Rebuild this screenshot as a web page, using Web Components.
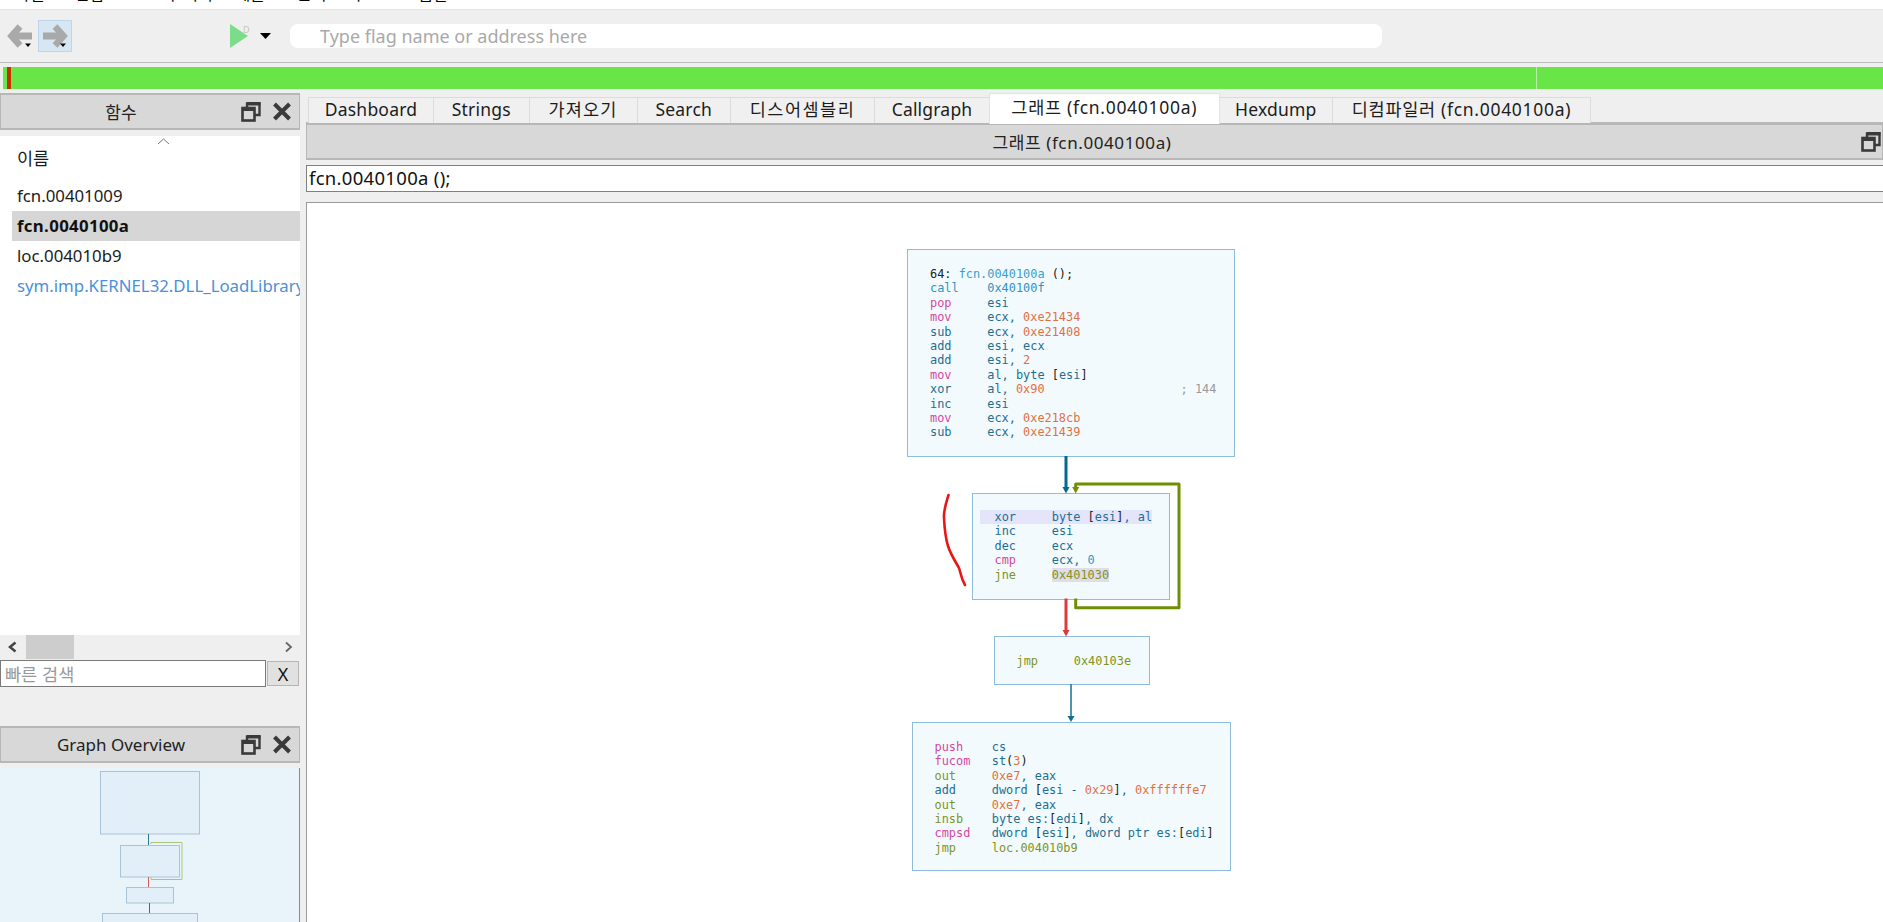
<!DOCTYPE html>
<html lang="ko"><head><meta charset="utf-8"><title>Cutter</title>
<style>
html,body{margin:0;padding:0;height:100%;overflow:hidden;background:#efefef;font-family:"Noto Sans","Noto Sans CJK KR",sans-serif;color:#111}
asm-line i{font-style:normal}
.k{color:#1d6f8f}.p{color:#d5479f}.c{color:#3193bd}.g{color:#7f9420}.o{color:#e2703f}.n{color:#2a9cc4}.b{color:#222}.m{color:#9a9a9a}.f{color:#3aa0c8}
</style></head><body>
<script>
function def(name, html, setup){
  customElements.define(name, class extends HTMLElement{
    constructor(){super();this.attachShadow({mode:'open'}).innerHTML=html;}
    connectedCallback(){ if(setup) setup(this); }
  });
}
const FLOAT=`<svg width="20" height="21" viewBox="0 0 20 21"><path d="M6 6V2.5H18.5V14H14" fill="none" stroke="#3a3a3a" stroke-width="2.4"/><rect x="6" y="1" width="13.5" height="3.5" fill="#3a3a3a"/><rect x="1.5" y="7" width="12" height="12.5" fill="none" stroke="#3a3a3a" stroke-width="2.6"/><rect x="1" y="6.5" width="13" height="3.5" fill="#3a3a3a"/></svg>`;
const CLOSE=`<svg width="20" height="19" viewBox="0 0 20 19"><path d="M2.5 2L17.5 17M17.5 2L2.5 17" stroke="#3a3a3a" stroke-width="4" fill="none"/></svg>`;

def('menu-strip',`<style>:host{display:block;height:9px;background:#fff;border-bottom:1px solid #e4e4e4;overflow:hidden;font-size:16px;line-height:20px;color:#000}
div{display:flex;margin-top:-16px;height:20px;white-space:nowrap}</style>
<div><span style="margin-left:15px">파일</span><span style="margin-left:30px">편집</span><span style="margin-left:42px">보기</span><span style="margin-left:8px">디버그</span><span style="margin-left:8px">에뮬</span><span style="margin-left:32px">분석</span><span style="margin-left:10px">도구</span><span style="margin-left:38px">도움말</span></div>`);

def('tool-bar',`<style>:host{display:flex;align-items:center;height:52px;background:#efefef;border-bottom:1px solid #bcbcbc;box-sizing:content-box}
.back{width:35px;height:32px;margin-left:3px;display:block}
.fwd{width:32px;height:30px;background:#d7e6f3;border:1px solid #bfd5e9;display:block}
.play{width:46px;height:24px;margin-left:153px;display:block}
input{margin-left:19px;width:1092px;height:24px;box-sizing:border-box;border:0;border-radius:8px;background:#fff;padding:0 0 0 30px;font:18px "Noto Sans","Noto Sans CJK KR",sans-serif;outline:0}
input::placeholder{color:#a9a9a9;opacity:1}</style>
<svg class="back" viewBox="0 0 35 32"><path d="M10 16H29" stroke="#a9a9a9" stroke-width="7"/><path d="M17 6.500L8.500 16L17 25.500" stroke="#a9a9a9" stroke-width="6.500" fill="none"/><path d="M22 23.500h6l-3 3.500z" fill="#000"/></svg>
<svg class="fwd" viewBox="0 0 32 30"><path d="M4 15H23" stroke="#a9a9a9" stroke-width="7"/><path d="M16 5.500L24.500 15L16 24.500" stroke="#a9a9a9" stroke-width="6.500" fill="none"/><path d="M21 22.500h6l-3 3.500z" fill="#000"/></svg>
<svg class="play" viewBox="0 0 46 24"><path d="M5 0L23 12L5 24z" fill="#7bdc8a"/><text x="18" y="9" font-size="9" fill="#c4c4c4" font-family="Noto Sans">D</text><path d="M35 9h11l-5.500 6z" fill="#000"/></svg>
<input placeholder="Type flag name or address here">`);

def('seek-bar',`<style>:host{display:block;height:22px;margin:4px 0 4px 3px;background:linear-gradient(90deg,#69e548 4px,#c93000 4px,#c93000 7.500px,#69e548 7.500px,#69e548 1532.500px,#b8eea8 1532.500px,#b8eea8 1533.500px,#69e548 1533.500px)}</style>`);

def('dock-title',`<style>:host{display:flex;align-items:center;box-sizing:border-box;height:37px;background:#d8d8d8;border:solid #b7b7b7;border-width:2.500px 1px 2.500px 1px;font-size:17px;color:#222;white-space:nowrap}
.t{flex:1;text-align:center;padding-right:var(--pad,0px)}.ic{display:flex;align-items:center;gap:var(--igap,11px);padding-right:var(--iright,7px)}svg{display:block}</style>
<div class="t"><slot></slot></div><div class="ic" id="ic"></div>`,el=>{
  const ic=el.shadowRoot.getElementById('ic');
  ic.innerHTML=FLOAT+(el.hasAttribute('noclose')?'':CLOSE);
});

def('func-list',`<style>:host{display:block;height:500px;background:#fff;overflow:hidden;position:relative;font-size:16.800px;white-space:nowrap;color:#1b1b1b}
.caret{position:absolute;left:157px;top:2px}
.h{height:45px;box-sizing:border-box;padding:10px 0 0 17px;line-height:24px;font-size:17.500px}
</style><svg class="caret" width="13" height="7" viewBox="0 0 13 7"><path d="M1 6L6.500 1L12 6" fill="none" stroke="#777"/></svg>
<div class="h">이름</div><slot></slot>`);
def('func-row',`<style>:host{display:block;height:30px;line-height:30px;margin-left:12px;padding-left:5px;overflow:hidden}
:host([sel]){background:#d6d6d6;font-weight:700;letter-spacing:.35px;color:#111}:host([imp]){color:#4a90d9}</style><slot></slot>`);

def('h-scroll',`<style>:host{display:flex;align-items:center;height:24px;width:300px;position:relative}
.t{position:absolute;left:26px;top:0;width:48px;height:24px;background:#cdcdcd}svg{position:absolute;top:6px}</style>
<svg style="left:7px" width="11" height="12" viewBox="0 0 11 12"><path d="M8.500 1.500L3 6L8.500 10.500" fill="none" stroke="#444" stroke-width="2.500"/></svg><div class="t"></div>
<svg style="left:283px" width="11" height="12" viewBox="0 0 11 12"><path d="M3 1.500L8 6L3 10.500" fill="none" stroke="#666" stroke-width="1.800"/></svg>`);

def('quick-search',`<style>:host{display:flex;height:27px;margin-top:1px;width:299px}
input{width:266px;box-sizing:border-box;height:27px;border:1px solid #7a7a7a;background:#fff;padding:0 0 0 4px;font:17.500px "Noto Sans CJK KR","Noto Sans",sans-serif;outline:0}
input::placeholder{color:#999;opacity:1}
button{width:32px;height:25px;margin:1px 0 0 1px;border:1px solid #b5b5b5;background:#e1e1e1;font:18px "Noto Sans",sans-serif;color:#111;padding:0 0 2px}</style>
<input placeholder="빠른 검색"><button>X</button>`);

def('graph-overview',`<style>:host{display:block;height:154px;width:299px;margin-top:5px;background:#e8f4fa;border-right:1px solid #8a8a8a;overflow:hidden}svg{display:block}</style>
<svg width="299" height="154" viewBox="0 768 299 154">
<g fill="#e2eff9" stroke="#a9c2d4" stroke-width="1">
<rect x="100.500" y="771.500" width="99" height="62.500"/>
<rect x="120.500" y="845.500" width="59" height="31.500"/>
<rect x="126.500" y="887.500" width="47" height="15.500"/>
<rect x="102.500" y="913.500" width="95" height="49"/></g>
<path d="M148.500 834V845" stroke="#2b7596"/><path d="M151 844V842.500H182V879.500H151V877" fill="none" stroke="#a8c77a"/>
<path d="M148.500 877V887" stroke="#cf5d5d"/><path d="M149.500 903V913" stroke="#2b7596"/>
</svg>`);

def('left-dock',`<style>:host{display:flex;flex-direction:column;width:300px;flex:none}
.gap{height:6px}.gap2{height:40px}</style><slot name="top"></slot><div class="gap"></div><slot name="list"></slot><slot name="scroll"></slot><slot name="search"></slot><div class="gap2"></div><slot name="ov"></slot><slot name="ovp"></slot>`);

def('tab-bar',`<style>:host{display:flex;align-items:flex-end;height:30px;box-sizing:border-box;padding-left:3px;border-bottom:1.500px solid #b9b9b9;font-size:17.500px;letter-spacing:.2px;color:#1c1c1c;white-space:nowrap}</style><slot></slot>`);
def('tab-item',`<style>:host{display:block;box-sizing:border-box;height:26px;line-height:22px;text-align:center;background:#f0f0f0;border:1px solid #dcdcdc;border-bottom:0;margin-left:-1px;margin-bottom:-1px}
:host([active]){height:31px;line-height:26px;background:#fff;border-color:#e2e2e2;margin-bottom:-2px;position:relative;z-index:1}</style><slot></slot>`);

def('func-sig',`<style>:host{display:block;height:27px;box-sizing:border-box;margin-top:5px;border:solid #808080;border-width:1px 0 1px 1px;background:#fff;font-size:18.500px;letter-spacing:.3px;line-height:24px;padding-left:2px;color:#111;white-space:nowrap}</style><slot></slot>`);

def('graph-canvas',`<style>:host{display:block;position:relative;box-sizing:border-box;height:720px;margin-top:10px;background:#fff;border:solid #999;border-width:1.500px 0 0 1.500px;overflow:hidden}
svg{position:absolute;left:0;top:0}</style>
<slot></slot>
<svg width="1577" height="720" viewBox="307 203 1577 720">
<path d="M1066 456V488" stroke="#006b8c" stroke-width="3" fill="none"/><path d="M1062.500 487h7l-3.500 6.500z" fill="#006b8c"/>
<path d="M1075.700 598.500V607.700H1179V484H1075.700V488" stroke="#6e8f00" stroke-width="3" fill="none" stroke-linejoin="round"/><path d="M1072.200 487h7l-3.500 6.500z" fill="#6e8f00"/>
<path d="M1066 598.500V631" stroke="#dc3a3a" stroke-width="3" fill="none"/><path d="M1062.500 630h7l-3.500 6.500z" fill="#dc3a3a"/>
<path d="M1071 684V717" stroke="#156f90" stroke-width="1.500" fill="none"/><path d="M1067.500 716h7l-3.500 6z" fill="#156f90"/>
<path d="M948.500 495C946 503 943.500 510 944 518C944.500 528 945.500 538 948 546C950.500 554 955 561 958.500 567C961 572 960 576 965 585" stroke="#e81616" stroke-width="2.600" fill="none" stroke-linecap="round"/>
</svg>`);
def('graph-node',`<style>:host{display:block;position:absolute;box-sizing:border-box;background:#f3fafe;border:1.500px solid #8fbcdb;padding:var(--pt) 0 0 var(--pl);font:11.900px/14.400px "DejaVu Sans Mono",monospace;color:#1d6f8f}</style><slot></slot>`);
def('asm-line',`<style>:host{display:block;height:14.400px;white-space:pre}:host([hl]){width:fit-content;background:#e4e4fb;margin-left:-15px;padding-left:15px}</style><slot></slot>`);
def('right-dock',`<style>:host{display:flex;flex-direction:column;flex:1;min-width:0}</style><slot></slot>`);
def('dock-area',`<style>:host{display:flex;gap:6px;height:829px}</style><slot></slot>`);
def('app-shell',`<style>:host{display:block;height:922px;overflow:hidden}</style><slot></slot>`);
</script>
<app-shell>
<menu-strip></menu-strip>
<tool-bar></tool-bar>
<seek-bar></seek-bar>
<dock-area>
 <left-dock>
  <dock-title slot="top">함수</dock-title>
  <func-list slot="list">
   <func-row>fcn.00401009</func-row>
   <func-row sel>fcn.0040100a</func-row>
   <func-row>loc.004010b9</func-row>
   <func-row imp>sym.imp.KERNEL32.DLL_LoadLibraryA</func-row>
  </func-list>
  <h-scroll slot="scroll"></h-scroll>
  <quick-search slot="search"></quick-search>
  <dock-title slot="ov">Graph Overview</dock-title>
  <graph-overview slot="ovp"></graph-overview>
 </left-dock>
 <right-dock>
  <tab-bar>
   <tab-item style="width:126px">Dashboard</tab-item>
   <tab-item style="width:96.500px">Strings</tab-item>
   <tab-item style="width:109px;letter-spacing:1.200px">가져오기</tab-item>
   <tab-item style="width:94.500px">Search</tab-item>
   <tab-item style="width:145px;letter-spacing:1.500px">디스어셈블리</tab-item>
   <tab-item style="width:116px">Callgraph</tab-item>
   <tab-item active style="width:230.500px;letter-spacing:.7px">그래프 (fcn.0040100a)</tab-item>
   <tab-item style="width:114.500px">Hexdump</tab-item>
   <tab-item style="width:259px;letter-spacing:.7px">디컴파일러 (fcn.0040100a)</tab-item>
  </tab-bar>
  <dock-title noclose style="--pad:4px;--iright:1px;letter-spacing:.6px">그래프 (fcn.0040100a)</dock-title>
  <func-sig>fcn.0040100a ();</func-sig>
  <graph-canvas>
   <graph-node style="left:600px;top:46px;width:328px;height:208px;--pt:17px;--pl:22px">
<asm-line><i class="b">64: </i><i class="f">fcn.0040100a</i><i class="b"> ();</i></asm-line>
<asm-line><i class="c">call    0x40100f</i></asm-line>
<asm-line><i class="p">pop     </i>esi</asm-line>
<asm-line><i class="p">mov     </i>ecx, <i class="o">0xe21434</i></asm-line>
<asm-line>sub     ecx, <i class="o">0xe21408</i></asm-line>
<asm-line>add     esi, ecx</asm-line>
<asm-line>add     esi, <i class="o">2</i></asm-line>
<asm-line><i class="p">mov     </i>al, byte <i class="b">[</i>esi<i class="b">]</i></asm-line>
<asm-line>xor     al, <i class="o">0x90</i><i class="m">                   ; 144</i></asm-line>
<asm-line>inc     esi</asm-line>
<asm-line><i class="p">mov     </i>ecx, <i class="o">0xe218cb</i></asm-line>
<asm-line>sub     ecx, <i class="o">0xe21439</i></asm-line>
   </graph-node>
   <graph-node style="left:665px;top:290px;width:198px;height:107px;--pt:16px;--pl:21.500px">
<asm-line hl>xor     byte <i class="b">[</i>esi<i class="b">]</i>, al</asm-line>
<asm-line>inc     esi</asm-line>
<asm-line>dec     ecx</asm-line>
<asm-line><i class="p">cmp     </i>ecx, <i class="n">0</i></asm-line>
<asm-line><i class="g">jne     </i><i class="g" style="background:#e0dcec">0x401030</i></asm-line>
   </graph-node>
   <graph-node style="left:687px;top:433px;width:156px;height:49px;--pt:16.500px;--pl:21.500px">
<asm-line><i class="g">jmp     0x40103e</i></asm-line>
   </graph-node>
   <graph-node style="left:605px;top:519px;width:319px;height:149px;--pt:17px;--pl:21.500px">
<asm-line><i class="p">push    </i>cs</asm-line>
<asm-line><i class="p">fucom   </i>st<i class="b">(</i><i class="o">3</i><i class="b">)</i></asm-line>
<asm-line><i class="g">out     </i><i class="o">0xe7</i>, eax</asm-line>
<asm-line>add     dword <i class="b">[</i>esi - <i class="o">0x29</i><i class="b">]</i>, <i class="o">0xffffffe7</i></asm-line>
<asm-line><i class="g">out     </i><i class="o">0xe7</i>, eax</asm-line>
<asm-line><i class="g">insb    </i>byte es:<i class="b">[</i>edi<i class="b">]</i>, dx</asm-line>
<asm-line><i class="p">cmpsd   </i>dword <i class="b">[</i>esi<i class="b">]</i>, dword ptr es:<i class="b">[</i>edi<i class="b">]</i></asm-line>
<asm-line><i class="g">jmp     loc.004010b9</i></asm-line>
   </graph-node>
  </graph-canvas>
 </right-dock>
</dock-area>
</app-shell>
</body></html>
